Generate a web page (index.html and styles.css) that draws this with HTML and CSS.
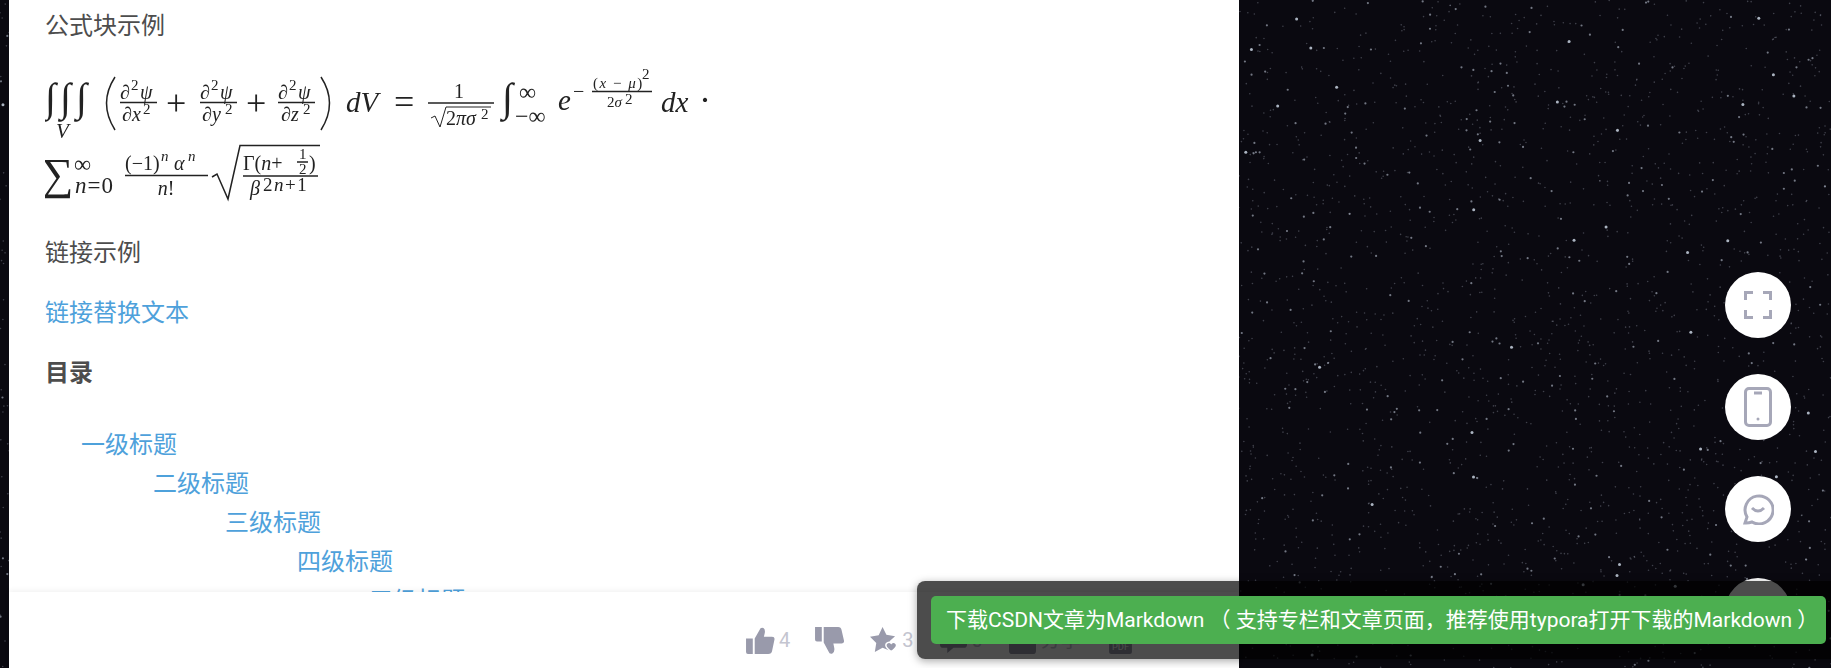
FILE: index.html
```html
<!DOCTYPE html>
<html lang="zh-CN">
<head>
  <meta charset="UTF-8">
  <title>公式块示例</title>
  <link rel="stylesheet" href="styles.css">
</head>
<body>
  <canvas id="stars" class="stars" width="1831" height="668"></canvas>

  <div class="page">
    <main class="article">
      <p>公式块示例</p>

      <svg class="formula" viewBox="45 62 680 154" role="img" aria-label="公式">
        <g class="ink">
          <!-- first line -->
          <text class="big" x="45" y="112">∫</text>
          <text class="big" x="60" y="112">∫</text>
          <text class="big" x="76" y="112">∫</text>
          <text class="it mid" x="56" y="139">V</text>
          <path class="stroke" d="M115 78 Q98 104 115 131"/>

          <text class="it small" x="120" y="100">∂</text><text class="sup" x="131" y="91">2</text><text class="it small" x="140" y="100">ψ</text>
          <line class="rule" x1="120" y1="103.500" x2="157" y2="103.500"/>
          <text class="it small" x="122" y="122">∂x</text><text class="sup" x="143" y="115">2</text>
          <text class="op" x="166" y="116">+</text>

          <text class="it small" x="200" y="100">∂</text><text class="sup" x="211" y="91">2</text><text class="it small" x="220" y="100">ψ</text>
          <line class="rule" x1="200" y1="103.500" x2="237" y2="103.500"/>
          <text class="it small" x="202" y="122">∂y</text><text class="sup" x="225" y="115">2</text>
          <text class="op" x="246" y="116">+</text>

          <text class="it small" x="278" y="100">∂</text><text class="sup" x="289" y="91">2</text><text class="it small" x="298" y="100">ψ</text>
          <line class="rule" x1="278" y1="103.500" x2="315" y2="103.500"/>
          <text class="it small" x="281" y="122">∂z</text><text class="sup" x="303" y="115">2</text>
          <path class="stroke" d="M321 78 Q338 104 321 131"/>

          <text class="it main" x="346" y="113">dV</text>
          <text class="op" x="394" y="115">=</text>

          <text class="small" x="459" y="99" text-anchor="middle">1</text>
          <line class="rule" x1="428" y1="104" x2="494" y2="104"/>
          <path class="thin" d="M431 119 L435 117 L440 128 L446 108 H491"/>
          <text class="small" x="446" y="126">2<tspan class="it">πσ</tspan></text>
          <text class="sup" x="481" y="120">2</text>

          <text class="big" x="502" y="112">∫</text>
          <text class="inf" x="519" y="101">∞</text>
          <text class="inf" x="515" y="125">−∞</text>

          <text class="it main" x="558" y="111">e</text>
          <text class="small" x="573" y="99">−</text>
          <text class="frac-top" x="593" y="89">(<tspan class="it">x</tspan> − <tspan class="it">μ</tspan>)</text>
          <text class="sup" x="642" y="80">2</text>
          <line class="rule" x1="592" y1="92.500" x2="652" y2="92.500"/>
          <text class="sup" x="607" y="108">2<tspan class="it">σ</tspan></text>
          <text class="sup" x="625" y="105">2</text>
          <text class="it main" x="661" y="113">dx</text>
          <text class="op" x="699" y="113">·</text>

          <!-- second line -->
          <text class="sum" x="42" y="190">∑</text>
          <text class="inf" x="74" y="173">∞</text>
          <text class="lim" x="75" y="194"><tspan class="it">n</tspan>=0</text>

          <text class="small" x="125" y="171">(−1)</text><text class="sup it" x="161" y="162">n</text>
          <text class="it small" x="174" y="171">α</text><text class="sup it" x="188" y="162">n</text>
          <line class="rule" x1="125" y1="176.500" x2="208" y2="176.500"/>
          <text class="small" x="166" y="196" text-anchor="middle"><tspan class="it">n</tspan>!</text>

          <path class="stroke" d="M212 178 L217 175 L228 200 L240 146.500 H320"/>
          <text class="small" x="243" y="171">Γ(<tspan class="it">n</tspan>+</text>
          <text class="sup" x="299" y="160">1</text>
          <line class="rule" x1="297" y1="163" x2="308" y2="163"/>
          <text class="sup" x="299" y="175">2</text>
          <text class="small" x="309" y="171">)</text>
          <line class="rule" x1="243" y1="177" x2="318" y2="177"/>
          <text class="small it" x="250" y="196">β</text>
          <text class="pow" x="263" y="192">2<tspan class="it">n</tspan>+1</text>
        </g>
      </svg>

      <p>链接示例</p>
      <p><a href="#">链接替换文本</a></p>
      <p class="toc-title">目录</p>

      <ul class="toc">
        <li><a href="#">一级标题</a>
          <ul>
            <li><a href="#">二级标题</a>
              <ul>
                <li><a href="#">三级标题</a>
                  <ul>
                    <li><a href="#">四级标题</a>
                      <ul>
                        <li><a href="#">五级标题</a></li>
                      </ul>
                    </li>
                  </ul>
                </li>
              </ul>
            </li>
          </ul>
        </li>
      </ul>
    </main>

    <footer class="toolbar">
      <div class="tool">
        <svg class="tool-icon" viewBox="0 0 30 28"><path d="M0 12h7v16H2a2 2 0 0 1-2-2zM9 12l5-9q1-3 4-2 2 1 1.500 5l-1 4H27q3 0 2.500 3L27 25q-.5 3-4 3H9z"/></svg>
        <span class="count">4</span>
      </div>
      <div class="tool">
        <svg class="tool-icon" viewBox="0 0 30 28"><path d="M0 0h7v15H2a2 2 0 0 1-2-2zM9 0h15q3 0 3.500 3L30 14q.5 3-2.500 3H19l1 5q.5 4-2 5.500-3 1-4-2L9 16z"/></svg>
      </div>
      <div class="tool">
        <svg class="tool-icon" viewBox="0 0 28 28"><path d="M13 0l4 8 9 1.500-5.500 5-1 9.500-6.500-2.500L5 26l1.500-9.500L0 10l9-1.500z"/><path class="heart" d="M22 17c2-2.500 6-.5 5.500 2.500-.5 2-3 4-5.500 6-2.500-2-5-4-5.500-6-.5-3 3.500-5 5.500-2.500z"/></svg>
        <span class="count">3</span>
      </div>
      <div class="tool">
        <svg class="tool-icon" viewBox="0 0 26 26"><path d="M3 1h20q3 0 3 3v13q0 3-3 3H13l-6 5v-5H3q-3 0-3-3V4q0-3 3-3z"/></svg>
        <span class="count">0</span>
      </div>
      <div class="tool">
        <svg class="tool-icon" viewBox="0 0 26 26"><path d="M3 1h20q3 0 3 3v19q0 3-3 3H3q-3 0-3-3V4q0-3 3-3z"/></svg>
        <span class="count">分享</span>
      </div>
      <div class="tool">
        <svg class="tool-icon" viewBox="0 0 22 26"><path d="M2 0h18q2 0 2 2v22q0 2-2 2H2q-2 0-2-2V2q0-2 2-2z"/><text class="pdf" x="11" y="22" text-anchor="middle">PDF</text></svg>
      </div>
    </footer>
  </div>

  <div class="side-buttons">
    <div class="side-btn">
      <svg viewBox="0 0 28 28" class="side-icon"><path d="M1.500 9V1.500H9M19 1.500h7.500V9M26.500 19v7.500H19M9 26.500H1.500V19"/></svg>
    </div>
    <div class="side-btn">
      <svg viewBox="0 0 28 40" class="side-icon"><rect x="1.500" y="1.500" width="25" height="37" rx="3.500"/><path d="M10 6h8"/><circle class="dot" cx="14" cy="32" r="1.500"/></svg>
    </div>
    <div class="side-btn">
      <svg viewBox="0 0 32 32" class="side-icon"><path d="M3 30l2-6A14 14 0 1 1 10 29q-3.500 1.200-7 1z"/><path d="M10 15q6 6 12 0"/></svg>
    </div>
    <div class="side-btn"></div>
  </div>

  <div class="toast-box">
    <div class="toast">下载CSDN文章为Markdown （ 支持专栏和文章页面，推荐使用typora打开下载的Markdown ）</div>
  </div>

  <script src="stars.js"></script>
</body>
</html>
```

FILE: styles.css
```css
html, body {
  margin: 0;
  height: 100%;
}

body {
  position: relative;
  height: 668px;
  overflow: hidden;
  background: #0a0910;
  font-family: "Noto Sans CJK SC", "Noto Sans", sans-serif;
  color: #4d4d4d;
}

.stars {
  position: absolute;
  left: 0;
  top: 0;
  filter: blur(0.5px);
}

.page {
  position: relative;
  display: flex;
  flex-direction: column;
  width: 1230px;
  height: 668px;
  margin-left: 9px;
  background: #fff;
}

.article {
  flex: 1;
  min-height: 0;
  overflow: hidden;
  padding: 6px 36px 0;
  font-size: 24px;
  line-height: 36px;
}

.article p {
  margin: 0 0 24px;
}

.article a {
  color: #4ea1db;
  text-decoration: none;
}

.toc-title {
  font-weight: bold;
}

.formula {
  display: block;
  width: 680px;
  height: 154px;
  margin: -5px 0 18px;
  filter: blur(0.6px);
}

.ink text {
  font-family: "Liberation Serif", "DejaVu Serif", serif;
  fill: #222;
}

.ink .big { font-size: 40px; }
.ink .sum { font-size: 44px; }
.ink .main { font-size: 29px; }
.ink .mid { font-size: 21px; }
.ink .op { font-size: 36px; }
.ink .small { font-size: 20px; }
.ink .sup { font-size: 15px; }
.ink .inf { font-size: 24px; }
.ink .lim { font-size: 23px; letter-spacing: 1px; }
.ink .pow { font-size: 19px; letter-spacing: 1.500px; }
.ink .frac-top { font-size: 15px; letter-spacing: 1.500px; }

.it { font-style: italic; }

.rule {
  stroke: #222;
  stroke-width: 1.500;
}

.stroke, .thin {
  fill: none;
  stroke: #222;
  stroke-width: 1.500;
}

.thin { stroke-width: 1; }

.toc,
.toc ul {
  list-style: none;
  margin: 0;
  padding: 0 0 0 36px;
}

.toc {
  margin-top: 34px;
  line-height: 39px;
}

.toc ul {
  padding-left: 72px;
}

.toolbar {
  position: relative;
  display: flex;
  align-items: flex-start;
  height: 41px;
  flex-shrink: 0;
  padding: 35px 0 0 737px;
  background: #fff;
  box-shadow: 0 -2px 5px rgba(0, 0, 0, 0.05);
}

.tool {
  display: flex;
  align-items: center;
  gap: 4px;
  height: 27px;
  margin-right: 25px;
}

.tool-icon {
  height: 27px;
  width: 29px;
  fill: #999aab;
}

.tool-icon .heart {
  stroke: #fff;
  stroke-width: 1.500;
}

.tool-icon .pdf {
  font-family: Roboto, sans-serif;
  font-size: 9px;
  fill: #fff;
}

.count {
  font-family: Roboto, "Noto Sans CJK SC", sans-serif;
  font-size: 20px;
  line-height: 27px;
  color: #c4c5d0;
}

.side-buttons {
  position: absolute;
  left: 1725px;
  top: 272px;
  display: flex;
  flex-direction: column;
  gap: 36px;
}

.side-btn {
  display: flex;
  align-items: center;
  justify-content: center;
  width: 66px;
  height: 66px;
  border-radius: 50%;
  background: #fff;
}

.side-icon {
  height: 28px;
  fill: none;
  stroke: #a6a7b8;
  stroke-width: 3;
}

.side-btn:nth-child(2) .side-icon {
  height: 40px;
}

.side-btn:nth-child(3) .side-icon {
  height: 32px;
}

.side-icon .dot {
  fill: #a6a7b8;
  stroke: none;
}

.toast-box {
  position: absolute;
  left: 917px;
  top: 581px;
  width: 894px;
  padding: 15px 15px 15px 14px;
  background: rgba(0, 0, 0, 0.7);
  border-radius: 8px;
  box-shadow: 0 2px 8px rgba(0, 0, 0, 0.35);
}

.toast {
  width: 895px;
  height: 48px;
  padding-left: 15px;
  box-sizing: border-box;
  background: #4caf50;
  border-radius: 5px;
  font-family: Roboto, "Noto Sans CJK SC", sans-serif;
  font-size: 21px;
  line-height: 48px;
  white-space: nowrap;
  color: #fff;
}
```

FILE: stars.js
```js
// star field behind the page, seeded so it stays the same every load
const ctx = document.getElementById("stars").getContext("2d");
let seed = 7;

function rnd() {
  seed = (seed * 16807) % 2147483647;
  return seed / 2147483647;
}

for (let i = 0; i < 7000; i++) {
  const x = rnd() * 1831;
  const y = rnd() * 668;
  const big = rnd();
  const r = big > 0.98 ? 1.5 : big > 0.85 ? 1.1 : 0.8;
  const a = big > 0.98 ? 0.85 : big > 0.85 ? 0.55 : 0.28;
  ctx.fillStyle = `rgba(200, 210, 225, ${a})`;
  ctx.beginPath();
  ctx.arc(x, y, r, 0, Math.PI * 2);
  ctx.fill();
}
```
